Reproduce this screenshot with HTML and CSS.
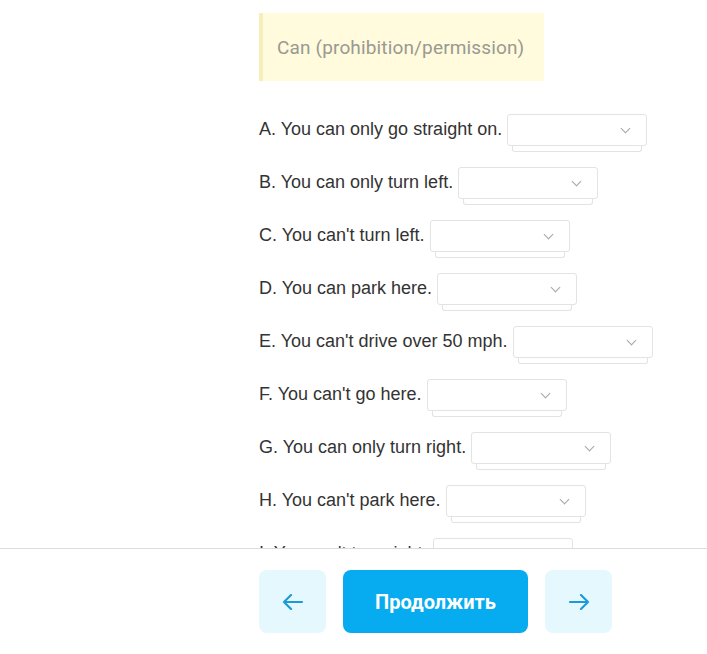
FILE: index.html
```html
<!DOCTYPE html>
<html lang="en">
<head>
<meta charset="utf-8">
<title>Can</title>
<link rel="stylesheet" href="styles.css">
</head>
<body>
<main class="content">
  <div class="note">Can (prohibition/permission)</div>
  <ul class="tasks">
    <li class="task"><span class="task-text">A. You can only go straight on.</span><span class="select"><span class="chev"></span></span></li>
    <li class="task"><span class="task-text">B. You can only turn left.</span><span class="select"><span class="chev"></span></span></li>
    <li class="task"><span class="task-text">C. You can't turn left.</span><span class="select"><span class="chev"></span></span></li>
    <li class="task"><span class="task-text">D. You can park here.</span><span class="select"><span class="chev"></span></span></li>
    <li class="task"><span class="task-text">E. You can't drive over 50 mph.</span><span class="select"><span class="chev"></span></span></li>
    <li class="task"><span class="task-text">F. You can't go here.</span><span class="select"><span class="chev"></span></span></li>
    <li class="task"><span class="task-text">G. You can only turn right.</span><span class="select"><span class="chev"></span></span></li>
    <li class="task"><span class="task-text">H. You can't park here.</span><span class="select"><span class="chev"></span></span></li>
    <li class="task"><span class="task-text">I. You can't turn right.</span><span class="select"><span class="chev"></span></span></li>
  </ul>
</main>
<footer class="bar">
  <button class="nav-btn" aria-label="Назад">
    <svg width="22" height="16" viewBox="0 0 22 16"><path d="M2 8H20M9 1L2 8L9 15" fill="none" stroke="#1f9ad8" stroke-width="2.2" stroke-linecap="round" stroke-linejoin="round"/></svg>
  </button>
  <button class="main-btn">Продолжить</button>
  <button class="nav-btn" aria-label="Вперёд">
    <svg width="22" height="16" viewBox="0 0 22 16"><path d="M20 8H2M13 1L20 8L13 15" fill="none" stroke="#1f9ad8" stroke-width="2.2" stroke-linecap="round" stroke-linejoin="round"/></svg>
  </button>
</footer>
</body>
</html>
```
FILE: styles.css
```css
* { box-sizing: border-box; }
html, body { margin: 0; padding: 0; background: #fff; }
body {
  font-family: "Liberation Sans", Arial, sans-serif;
  color: #333;
  height: 654px;
  overflow: hidden;
}
.content {
  padding: 13px 0 0 259px;
}
.note {
  width: 285px;
  height: 68px;
  background: #fffbdc;
  border-left: 4px solid #f5efbb;
  padding-left: 14px;
  display: flex;
  align-items: center;
  font-family: Roboto, "Liberation Sans", sans-serif;
  font-size: 19px;
  color: #999993;
  letter-spacing: 0.15px;
}
.tasks {
  list-style: none;
  margin: 22px 0 0;
  padding: 0;
}
.task {
  height: 53px;
  display: flex;
  align-items: center;
  gap: 5px;
  font-size: 18px;
}
.task-text { white-space: nowrap; }
.select {
  position: relative;
  width: 140px;
  height: 32px;
  border: 1px solid #e3e3e3;
  border-radius: 3px;
  background: #fff;
  margin-top: 1px;
}
.select::before {
  content: "";
  position: absolute;
  left: 4px;
  right: 4px;
  top: 100%;
  height: 5px;
  margin-top: 1px;
  border: 1px solid #e3e3e3;
  border-top: none;
  border-radius: 0 0 3px 3px;
  background: #fff;
}
.chev {
  position: absolute;
  right: 17px;
  top: 10px;
  width: 7px;
  height: 7px;
  border-right: 1.5px solid #a5a5a5;
  border-bottom: 1.5px solid #a5a5a5;
  transform: rotate(45deg);
}
.bar {
  position: fixed;
  left: 0;
  right: 0;
  bottom: 0;
  height: 106px;
  background: #fff;
  border-top: 1px solid #dcdcdc;
  display: flex;
  padding: 21px 0 0 259px;
  gap: 17px;
  z-index: 5;
}
.nav-btn {
  width: 67px;
  height: 63px;
  border: none;
  border-radius: 8px;
  background: #e5f8fe;
  display: flex;
  align-items: center;
  justify-content: center;
  padding: 0;
}
.main-btn {
  width: 185px;
  height: 63px;
  border: none;
  border-radius: 8px;
  background: #07acf0;
  color: #fff;
  font-family: Roboto, "Liberation Sans", sans-serif;
  font-weight: 700;
  font-size: 20px;
  padding: 0;
}
```
